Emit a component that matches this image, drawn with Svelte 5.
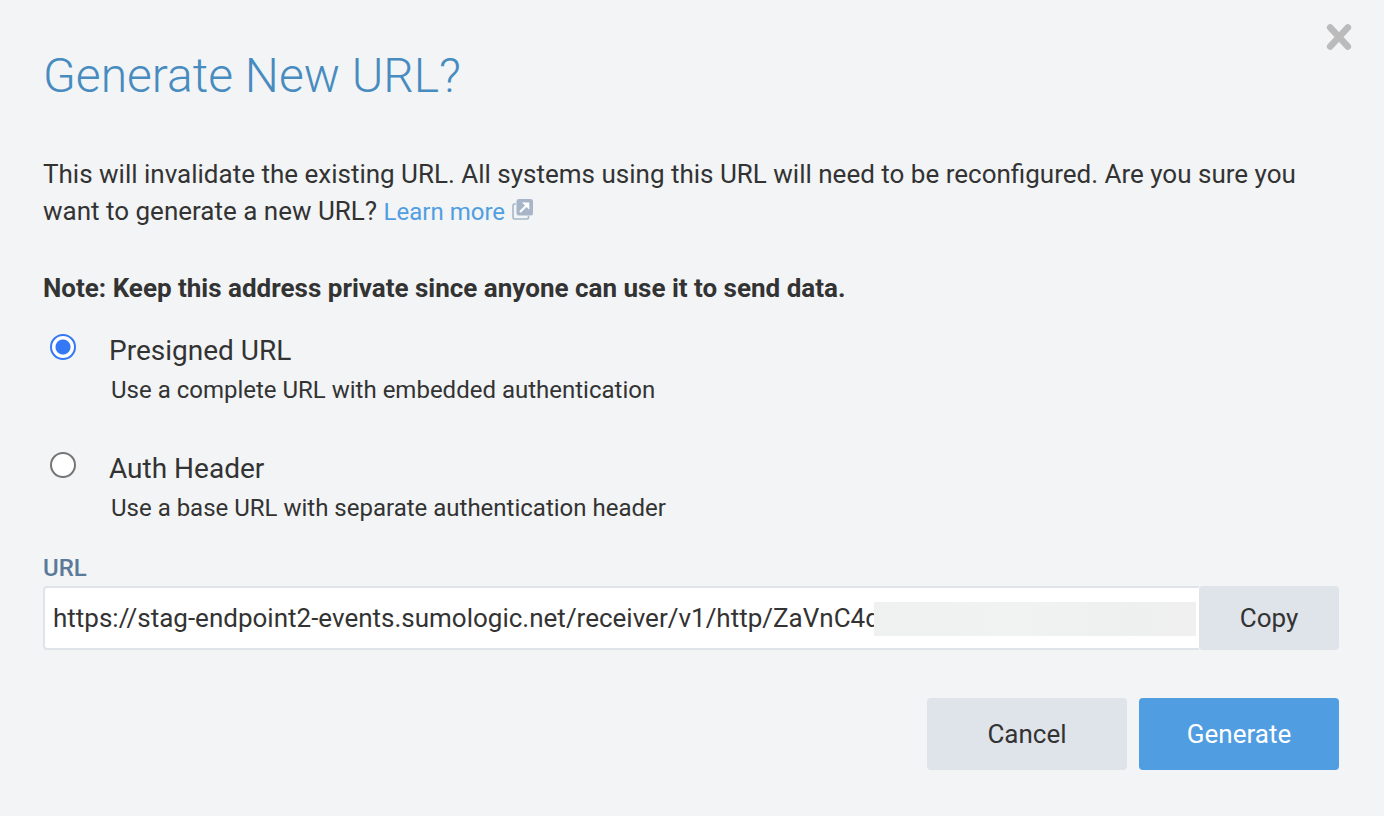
<script>
  let mode = $state('presigned');
  let url = $state('https://stag-endpoint2-events.sumologic.net/receiver/v1/http/ZaVnC4d');
  const options = [
    { value: 'presigned', title: 'Presigned URL', hint: 'Use a complete URL with embedded authentication' },
    { value: 'header', title: 'Auth Header', hint: 'Use a base URL with separate authentication header' }
  ];
</script>

<div class="dialog" role="dialog" aria-labelledby="dialog-title">
  <header>
    <h1 id="dialog-title">Generate New URL?</h1>
    <button class="close" type="button" aria-label="Close">
      <svg width="26" height="28" viewBox="0 0 26 28" aria-hidden="true">
        <path d="M4.200 4.500L21.800 23.500M21.800 4.500L4.200 23.500" stroke="#bbb" stroke-width="6.600" stroke-linecap="round" />
      </svg>
    </button>
  </header>

  <main>
    <p class="message">
      This will invalidate the existing URL. All systems using this URL will need to be reconfigured. Are you sure you
      want to generate a new URL?
      <a href="#learn-more"><span>Learn more</span><svg width="22" height="22" viewBox="0 0 22 22" aria-hidden="true">
          <path d="M4 5H2.500Q1 5 1 6.500V18.500Q1 20 2.500 20H15Q16.500 20 16.500 18.500V17" fill="none" stroke="#a6b6c8" stroke-width="1.600" />
          <rect x="4.500" y="0" width="16.500" height="16.500" rx="2.500" fill="#a6b6c8" />
          <path d="M8 13L15 6" stroke="#fff" stroke-width="2.200" />
          <path d="M10 3.500H17.300V10.800Z" fill="#fff" />
        </svg></a>
    </p>

    <p class="note">Note: Keep this address private since anyone can use it to send data.</p>

    <div class="options" role="radiogroup" aria-label="Authentication">
      {#each options as option}
        <label class="option">
          <input type="radio" name="mode" value={option.value} bind:group={mode} />
          <span class="copy">
            <span class="name">{option.title}</span>
            <span class="hint">{option.hint}</span>
          </span>
        </label>
      {/each}
    </div>

    <label class="field-label" for="url">URL</label>
    <div class="field">
      <div class="box">
        <input id="url" type="text" bind:value={url} />
        <span class="redacted"></span>
      </div>
      <button class="copy-button" type="button">Copy</button>
    </div>

    <footer>
      <button type="button">Cancel</button>
      <button class="primary" type="button">Generate</button>
    </footer>
  </main>
</div>

<style>
  :global(body) {
    margin: 0;
    background: #f2f4f6;
  }
  .dialog {
    box-sizing: border-box;
    min-height: 100vh;
    font-family: Roboto, sans-serif;
    font-size: 26px;
    color: #333;
  }
  header {
    display: flex;
    justify-content: space-between;
    align-items: flex-start;
    padding: 23px 32px 0 43px;
  }
  h1 {
    margin: 25px 0 0;
    font-size: 48px;
    line-height: 56px;
    font-weight: 300;
    color: #478bbf;
  }
  button {
    border: 0;
    padding: 0;
    border-radius: 4px;
    background: #dfe3ea;
    color: #333;
    font: inherit;
    cursor: pointer;
  }
  .close {
    background: none;
  }
  svg {
    display: block;
  }
  main {
    padding: 52px 45px 46px 43px;
  }
  p {
    margin: 0;
    line-height: 37px;
  }
  a {
    display: inline-flex;
    gap: 7px;
    color: #509ee1;
    font-size: 24px;
    line-height: 28px;
    text-decoration: none;
  }
  a svg {
    margin-top: 1px;
  }
  .note {
    margin-top: 40px;
    font-weight: 700;
  }
  .options {
    display: grid;
    gap: 40px;
    margin-top: 27px;
  }
  .option {
    display: flex;
    align-items: flex-start;
    gap: 33px;
    padding-left: 7px;
  }
  .option input {
    appearance: none;
    flex: none;
    box-sizing: border-box;
    width: 26px;
    height: 26px;
    margin: 0;
    border: 2px solid #757575;
    border-radius: 50%;
    background: #fff;
  }
  .option input:checked {
    border-color: #3478f6;
    background: radial-gradient(circle, #3478f6 7px, #fff 8px);
  }
  .copy {
    display: grid;
  }
  .name {
    font-size: 28px;
    line-height: 34px;
  }
  .hint {
    padding-left: 2px;
    font-size: 24px;
    line-height: 44px;
  }
  .field-label {
    display: block;
    margin-top: 22px;
    font-size: 24px;
    line-height: 32px;
    font-weight: 500;
    color: #5b7a99;
  }
  .field {
    display: flex;
    margin-top: 2px;
    height: 64px;
  }
  .box {
    position: relative;
    flex: 1;
    display: flex;
  }
  .box input {
    box-sizing: border-box;
    width: 100%;
    padding: 0 8px;
    border: 2px solid #dfe3ea;
    border-right: 0;
    border-radius: 4px 0 0 4px;
    background: #fff;
    color: #333;
    font: inherit;
  }
  .redacted {
    position: absolute;
    top: 16px;
    right: 3px;
    width: 322px;
    height: 34px;
    background: linear-gradient(90deg, #eff0f0, #f1f2f2 45%, #eeefef 80%, #f0f0f0);
  }
  .copy-button {
    width: 140px;
  }
  footer {
    display: flex;
    justify-content: flex-end;
    gap: 12px;
    margin-top: 48px;
  }
  footer button {
    width: 200px;
    height: 72px;
  }
  footer .primary {
    background: #509ee1;
    color: #fff;
  }
</style>
